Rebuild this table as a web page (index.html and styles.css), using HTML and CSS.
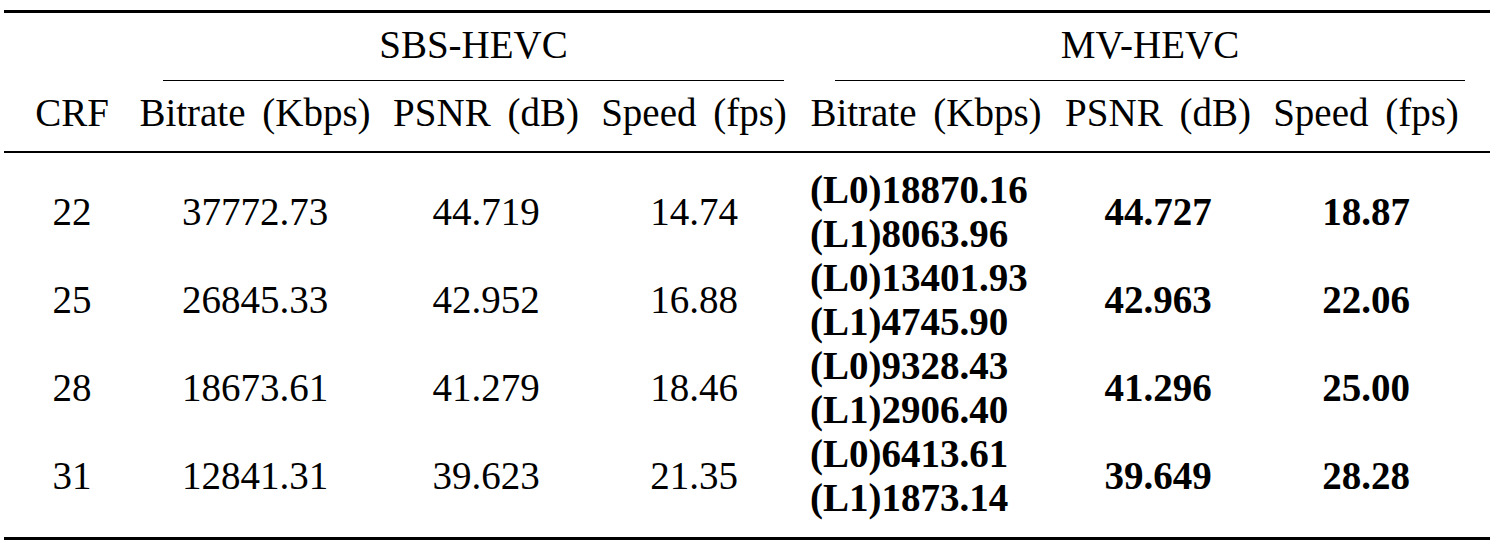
FILE: index.html
```html
<!DOCTYPE html>
<html>
<head>
  <title>SBS-HEVC vs MV-HEVC</title>
  <link rel="stylesheet" href="styles.css">
</head>
<body>

<div class="results">
  <!-- encabezado de grupos -->
  <div class="row groups">
    <div class="blank"></div>
    <div class="group sbs"><div class="rule">SBS-HEVC</div></div>
    <div class="group mv"><div class="rule">MV-HEVC</div></div>
  </div>

  <div class="row head">
    <div>CRF</div>
    <div>Bitrate (Kbps)</div>
    <div>PSNR (dB)</div>
    <div>Speed (fps)</div>
    <div>Bitrate (Kbps)</div>
    <div>PSNR (dB)</div>
    <div>Speed (fps)</div>
  </div>

  <div class="body">
    <div class="row data">
      <div>22</div>
      <div>37772.73</div>
      <div>44.719</div>
      <div>14.74</div>
      <div class="layers"><div>(L0)18870.16</div><div>(L1)8063.96</div></div>
      <div class="bold">44.727</div>
      <div class="bold">18.87</div>
    </div>
    <div class="row data">
      <div>25</div>
      <div>26845.33</div>
      <div>42.952</div>
      <div>16.88</div>
      <div class="layers"><div>(L0)13401.93</div><div>(L1)4745.90</div></div>
      <div class="bold">42.963</div>
      <div class="bold">22.06</div>
    </div>
    <div class="row data">
      <div>28</div>
      <div>18673.61</div>
      <div>41.279</div>
      <div>18.46</div>
      <div class="layers"><div>(L0)9328.43</div><div>(L1)2906.40</div></div>
      <div class="bold">41.296</div>
      <div class="bold">25.00</div>
    </div>
    <div class="row data">
      <div>31</div>
      <div>12841.31</div>
      <div>39.623</div>
      <div>21.35</div>
      <div class="layers"><div>(L0)6413.61</div><div>(L1)1873.14</div></div>
      <div class="bold">39.649</div>
      <div class="bold">28.28</div>
    </div>
  </div>
</div>

</body>
</html>
```

FILE: styles.css
```css
* { box-sizing: border-box; }
body { margin: 0; background: #fff; color: #000; font-family: "Liberation Serif", "Times New Roman", serif; font-size: 39px; }

.results { width: 1486px; margin: 10px 0 0 4px; border-top: 3px solid #000; border-bottom: 3px solid #000; }
.row { display: flex; line-height: 44px; text-align: center; white-space: nowrap; }
.row > div { flex: none; }

/* columnas */
.row > :nth-child(1) { width: 124px; padding-left: 12px; }
.row > :nth-child(2) { width: 254px; }
.row > :nth-child(3) { width: 208px; }
.row > :nth-child(4) { width: 208px; }
.row > :nth-child(5) { width: 256px; }
.row > :nth-child(6) { width: 208px; }
.row > :nth-child(7) { width: 228px; padding-right: 20px; }

.groups { padding-top: 10px; }
.groups > .sbs { width: 670px; padding: 0 14px 0 35px; }
.groups > .mv { width: 692px; padding: 0 25px 0 37px; }
.group .rule { border-bottom: 1.5px solid #000; padding-bottom: 13px; }

.head { padding: 10px 0 16px; border-bottom: 2px solid #000; word-spacing: 7px; }

.body { padding: 15px 0 17px; }
.data { align-items: center; }
.data .layers { text-align: left; padding-left: 12px; font-weight: bold; }
.bold { font-weight: bold; }
```
